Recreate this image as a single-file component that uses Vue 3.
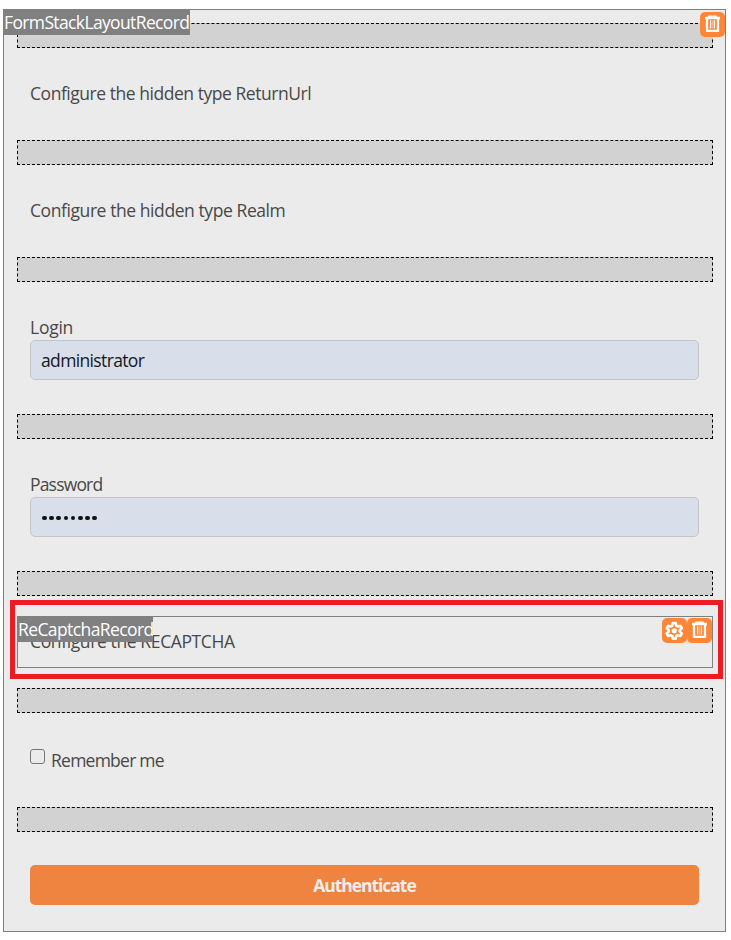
<script setup>
import { ref } from 'vue'

const login = ref('administrator')
const password = ref('password')
const remember = ref(false)
</script>

<template>
  <main class="frame">
    <span class="tag tag-form">FormStackLayoutRecord</span>
    <div class="tools tools-form">
      <button class="tool" aria-label="Delete layout">
        <svg viewBox="0 0 25 25"><path class="line" d="M9.5 5.200V4.700h6v.5M5 6h15M7 6.500v12.300h11V6.500" /><path class="thin" d="M10.600 8.300v8.200M14.400 8.300v8.200" /><path class="mid" d="M12.500 8.300v8.200" /></svg>
      </button>
    </div>

    <div class="drop"></div>
    <section class="row"><p class="text returnurl">Configure the hidden type ReturnUrl</p></section>
    <div class="drop"></div>
    <section class="row"><p class="text realm">Configure the hidden type Realm</p></section>
    <div class="drop"></div>
    <section class="row field">
      <label class="text login" for="login">Login</label>
      <input id="login" v-model="login" class="input" type="text" />
    </section>
    <div class="drop"></div>
    <section class="row field">
      <label class="text password">Password</label>
      <div class="input dots"><i v-for="n in password.length" :key="n"></i></div>
    </section>
    <div class="drop"></div>
    <section class="captcha-row">
      <div class="highlight">
        <div class="captcha">
          <p class="text recaptcha">Configure the RECAPTCHA</p>
          <span class="tag tag-captcha">ReCaptchaRecord</span>
          <div class="tools tools-captcha">
            <button class="tool" aria-label="Settings">
              <svg viewBox="0 0 25 25">
                <path class="gear" d="M10.800 5h2.900l.5 2.600 1.600.9 2.500-.8 1.500 2.500-2 1.700v1.900l2 1.700-1.500 2.500-2.500-.8-1.600.9-.5 2.600h-2.900l-.5-2.600-1.600-.9-2.500.8-1.500-2.500 2-1.700v-1.900l-2-1.700 1.500-2.500 2.500.8 1.600-.9z" />
                <circle class="hub" cx="12.250" cy="12.850" r="2.600" />
              </svg>
            </button>
            <button class="tool" aria-label="Delete captcha">
              <svg viewBox="0 0 25 25"><path class="line" d="M9.500 5.200V4.700h6v.5M5 6h15M7 6.500v12.300h11V6.500" /><path class="thin" d="M10.600 8.300v8.200M14.400 8.300v8.200" /><path class="mid" d="M12.500 8.300v8.200" /></svg>
            </button>
          </div>
        </div>
      </div>
    </section>
    <div class="drop"></div>
    <section class="row remember-row">
      <input id="remember" v-model="remember" class="check" type="checkbox" />
      <label class="text remember" for="remember">Remember me</label>
    </section>
    <div class="drop"></div>
    <section class="submit-row"><button class="submit">Authenticate</button></section>
  </main>
</template>

<style>
body {
  background: #fff;
}
</style>

<style scoped>
* {
  box-sizing: border-box;
}
.frame {
  position: relative;
  width: 723px;
  height: 923px;
  margin: 9px 0 0 3px;
  padding: 13px 12px 0 13px;
  border: 1px solid #808080;
  background: #ebebeb;
  color: #484848;
  font: 17.5px/26px "Open Sans", "Noto Sans", sans-serif;
}
.drop {
  height: 25px;
  border: 1px dashed #000;
  background: #d2d2d2;
}
.row {
  height: 92px;
  padding: 32px 14px 0 13px;
}
.row.field {
  height: 132px;
}
.text {
  display: block;
  width: max-content;
  margin: 0;
  white-space: nowrap;
}
.returnurl {
  letter-spacing: -0.46px;
}
.realm {
  letter-spacing: -0.42px;
}
.recaptcha {
  letter-spacing: -0.38px;
}
.login {
  letter-spacing: -0.25px;
}
.password {
  letter-spacing: -0.82px;
}
.remember {
  letter-spacing: -0.75px;
}
.input {
  display: block;
  width: 100%;
  height: 40px;
  padding: 0 10px;
  border: 1px solid #c4c4c8;
  border-radius: 5px;
  outline: 0;
  background: #d8deea;
  color: #151719;
  font: inherit;
  letter-spacing: -0.64px;
}
.dots {
  display: flex;
  align-items: center;
  gap: 2.5px;
  padding: 2px 0 0 11px;
}
.dots i {
  width: 4.7px;
  height: 4.7px;
  border-radius: 50%;
  background: #111;
}
.captcha-row {
  height: 92px;
  padding-top: 4px;
}
.highlight {
  width: 713px;
  height: 79px;
  margin-left: -7px;
  padding: 11px 5px 0 2px;
  border: 5px solid #ed1c24;
}
.captcha {
  position: relative;
  width: 696px;
  height: 52px;
  padding: 11px 12px;
  border: 1px solid #808080;
}
.tag {
  position: absolute;
  top: -1px;
  left: -1px;
  height: 26px;
  padding-left: 1px;
  background: #808080;
  color: #fff;
  line-height: 26px;
  white-space: nowrap;
}
.tag-form {
  width: 187px;
  letter-spacing: -0.63px;
}
.tag-captcha {
  width: 136px;
  letter-spacing: -0.6px;
}
.tools {
  position: absolute;
  display: flex;
}
.tools-form {
  top: 2px;
  right: 0;
}
.tools-captcha {
  top: 1px;
  right: 0;
}
.tool {
  width: 25px;
  height: 25px;
  padding: 0;
  border: 0;
  border-radius: 5px;
  background: #ff8636;
}
.tool svg {
  display: block;
  width: 25px;
  height: 25px;
  fill: none;
  stroke: #fff;
}
.line {
  stroke-width: 2.3;
}
.thin {
  stroke-width: 1.3;
}
.mid {
  stroke-width: 1;
  stroke-opacity: 0.35;
}
.gear {
  stroke-width: 2.6;
  stroke-linejoin: round;
}
.hub {
  fill: #fff;
  stroke: none;
}
.remember-row {
  display: flex;
  height: 94px;
  padding-top: 34px;
}
.check {
  width: 15px;
  height: 15px;
  margin: 2px 6px 0 0;
  appearance: none;
  border: 1px solid #767676;
  border-radius: 3px;
}
.submit-row {
  padding: 33px 14px 0 13px;
}
.submit {
  display: block;
  width: 100%;
  height: 40px;
  padding: 0 0 1px;
  border: 0;
  border-radius: 5px;
  background: #ee8440;
  color: #ededed;
  font: 700 17.5px/38px "Open Sans", "Noto Sans", sans-serif;
  letter-spacing: -1.05px;
}
</style>
